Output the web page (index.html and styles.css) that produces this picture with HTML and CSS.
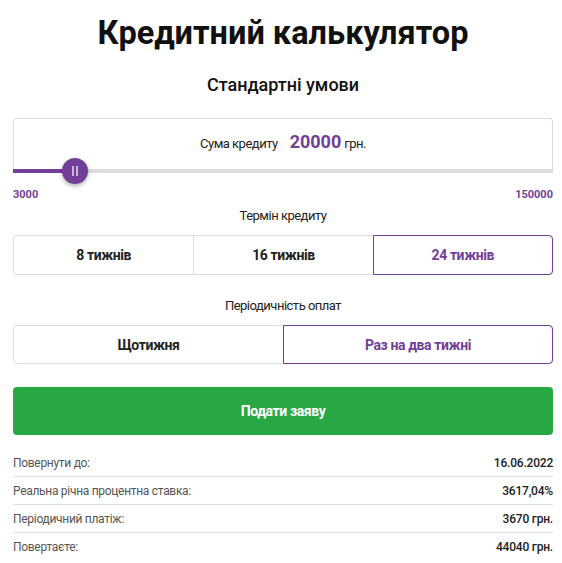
FILE: index.html
```html
<!DOCTYPE html>
<html lang="uk">
<head>
<meta charset="utf-8">
<link rel="stylesheet" href="styles.css">
</head>
<body>
<div class="calc">
  <h1 class="title">Кредитний калькулятор</h1>
  <h2 class="subtitle">Стандартні умови</h2>

  <div class="amount-card">
    <div class="amount-label">
      <span class="lbl">Сума кредиту</span>
      <span class="value">20000</span>
      <span class="cur">грн.</span>
    </div>
    <div class="track">
      <div class="track-fill" style="width: 62px"></div>
      <div class="thumb" style="left: 62px"><span class="bars"></span></div>
    </div>
  </div>
  <div class="range-labels"><span>3000</span><span>150000</span></div>

  <div class="group-label">Термін кредиту</div>
  <div class="seg seg3">
    <div class="opt">8 тижнів</div>
    <div class="opt">16 тижнів</div>
    <div class="opt active">24 тижнів</div>
  </div>

  <div class="group-label second">Періодичність оплат</div>
  <div class="seg seg2">
    <div class="opt">Щотижня</div>
    <div class="opt active">Раз на два тижні</div>
  </div>

  <button class="submit">Подати заяву</button>

  <div class="summary">
    <div class="row"><span class="k">Повернути до:</span><span class="v">16.06.2022</span></div>
    <div class="row"><span class="k">Реальна річна процентна ставка:</span><span class="v">3617,04%</span></div>
    <div class="row"><span class="k">Періодичний платіж:</span><span class="v">3670 грн.</span></div>
    <div class="row"><span class="k">Повертаєте:</span><span class="v">44040 грн.</span></div>
  </div>
</div>
</body>
</html>
```
FILE: styles.css
```css
* { box-sizing: border-box; }
html, body { margin: 0; padding: 0; background: #fff; }
body { font-family: Roboto, "Noto Sans", sans-serif; color: #222; }

.calc {
  width: 540px;
  margin: 0 0 0 13px;
  padding-top: 11px;
}

.title {
  margin: 0;
  text-align: center;
  font-size: 32.5px;
  font-weight: 700;
  line-height: 44px;
  color: #111;
}
.subtitle {
  margin: 18px 0 0;
  text-align: center;
  font-size: 18px;
  font-weight: 500;
  line-height: 24px;
  color: #111;
}

.amount-card {
  margin-top: 21px;
  border: 1px solid #dcdcdc;
  border-bottom: none;
  border-radius: 4px 4px 0 0;
  height: 55px;
  display: flex;
  flex-direction: column;
  justify-content: space-between;
}
.amount-label {
  display: flex;
  justify-content: center;
  align-items: baseline;
  padding-top: 12px;
  font-size: 13px;
  color: #222;
}
.amount-label .lbl,
.amount-label .cur { letter-spacing: -0.5px; }
.amount-label .value {
  color: #723f98;
  font-size: 18px;
  font-weight: 700;
  margin: 0 3px 0 12px;
}
.track {
  position: relative;
  height: 4px;
  margin: 0 -1px;
  background: #dcdcdc;
}
.track-fill {
  height: 4px;
  background: #723f98;
}
.thumb {
  position: absolute;
  top: 2px;
  width: 26px;
  height: 26px;
  margin: -13px 0 0 -13px;
  border-radius: 50%;
  background: #723f98;
  box-shadow: 0 2px 4px rgba(0,0,0,0.3);
  display: flex;
  align-items: center;
  justify-content: center;
}
.bars {
  width: 6px;
  height: 10px;
  border-left: 2px solid #c9b5da;
  border-right: 2px solid #c9b5da;
}

.range-labels {
  display: flex;
  justify-content: space-between;
  margin-top: 15px;
  font-size: 11px;
  font-weight: 700;
  color: #723f98;
  line-height: 14px;
}

.group-label {
  text-align: center;
  font-size: 13px;
  letter-spacing: -0.5px;
  line-height: 16px;
  margin-top: 6px;
  color: #222;
}
.group-label.second { margin-top: 23px; }

.seg {
  display: grid;
  margin-top: 11px;
  height: 40px;
  border: 1px solid #dcdcdc;
  border-radius: 4px;
}
.seg3 { grid-template-columns: 1fr 1fr 1fr; }
.seg2 { grid-template-columns: 1fr 1fr; height: 39px; }
.opt {
  display: flex;
  align-items: center;
  justify-content: center;
  font-size: 14px;
  letter-spacing: -0.4px;
  font-weight: 700;
  color: #222;
  border-left: 1px solid #dcdcdc;
  margin: -1px 0;
}
.opt:first-child { border-left: none; }
.opt.active {
  color: #723f98;
  border: 1px solid #723f98;
  border-radius: 0 4px 4px 0;
  margin: -1px -1px -1px 0;
}

.submit {
  display: block;
  width: 100%;
  height: 48px;
  margin-top: 23px;
  border: none;
  border-radius: 4px;
  background: #28a745;
  color: #fff;
  font-family: Roboto, "Noto Sans", sans-serif;
  font-size: 14px;
  letter-spacing: -0.4px;
  font-weight: 700;
}

.summary { margin-top: 14px; }
.row {
  display: flex;
  justify-content: space-between;
  align-items: center;
  height: 28px;
  font-size: 12px;
  border-bottom: 1px solid #dcdcdc;
}
.row:last-child { border-bottom: none; }
.row .k { color: #555; letter-spacing: -0.3px; }
.row .v { color: #222; font-weight: 500; letter-spacing: -0.2px; }
```
